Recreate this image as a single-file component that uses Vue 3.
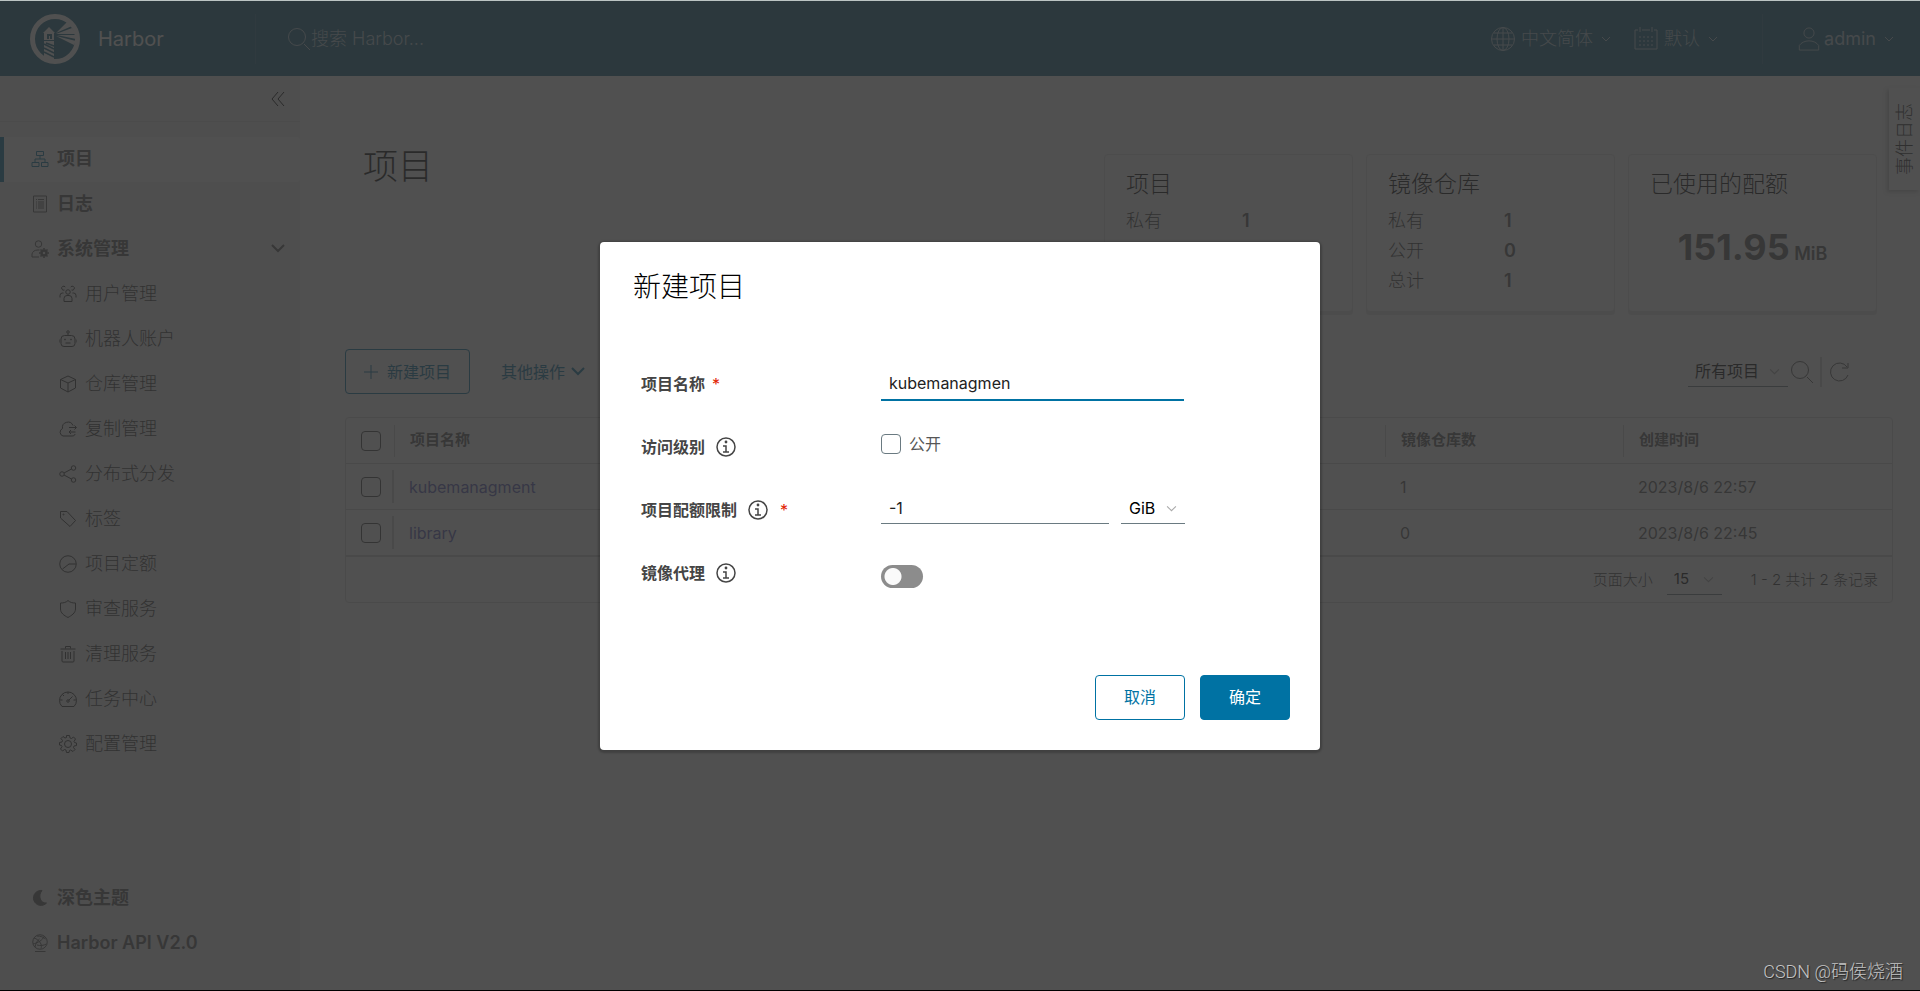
<script setup>
import { ref } from 'vue'

const adminItems = [
  { label: '用户管理', icon: 'users' },
  { label: '机器人账户', icon: 'robot' },
  { label: '仓库管理', icon: 'box' },
  { label: '复制管理', icon: 'cloud' },
  { label: '分布式分发', icon: 'share' },
  { label: '标签', icon: 'tag' },
  { label: '项目定额', icon: 'pie' },
  { label: '审查服务', icon: 'shield' },
  { label: '清理服务', icon: 'trash' },
  { label: '任务中心', icon: 'gauge' },
  { label: '配置管理', icon: 'cog' },
]

const icons = {
  users:
    '<circle cx="18" cy="14" r="4.5"/><path d="M10 33v-6a6 6 0 0 1 6-6h4a6 6 0 0 1 6 6v6zM11 10a4 4 0 1 1 1.500-6M25 10a4 4 0 1 0-1.500-6M2 25v-4a5 5 0 0 1 5-5h2M34 25v-4a5 5 0 0 0-5-5h-2"/>',
  robot:
    '<circle cx="18" cy="4" r="2.500"/><path d="M18 7v4M11 11h14a7 7 0 0 1 7 7v9a6 6 0 0 1-6 6H10a6 6 0 0 1-6-6v-9a7 7 0 0 1 7-7zM0 19v6M36 19v6M13 26h10"/><circle cx="12" cy="19" r="1"/><circle cx="24" cy="19" r="1"/>',
  box: '<path d="M18 2l15 7v17l-15 8-15-8V9zM3 9l15 7 15-7M18 16v18"/>',
  cloud:
    '<path d="M32 28c0 3-3 4-6 4H8a8 8 0 0 1-1-15 11 11 0 0 1 21-6M20 15h14M31 11l4 4-4 4M33 24H20M24 20l-4 4 4 4"/>',
  share:
    '<circle cx="6" cy="18" r="4.500"/><circle cx="29" cy="6" r="4.500"/><circle cx="29" cy="30" r="4.500"/><path d="M10 16l15-8M10 20l15 8"/>',
  tag: '<path d="M3 3h13l17 18-11 12L3 16z"/><circle cx="9" cy="9" r="1"/>',
  pie: '<circle cx="18" cy="18" r="16.500"/><path d="M34 18H20L7 28"/>',
  shield: '<path d="M18 1c4 4 9 5 15 5v12c0 8-8 13-15 17C10 31 3 26 3 18V6c6 0 11-1 15-5z"/>',
  trash: '<path d="M3 8h30M13 7V3h10v4M6 12v20a2 2 0 0 0 2 2h20a2 2 0 0 0 2-2V12M13 14v14M18 14v14M23 14v14"/>',
  gauge:
    '<path d="M6 33a17 17 0 1 1 24 0zM18 4v4M2 20h5M34 20h-5M7 9l3 3M19 21l8-8"/><circle cx="18" cy="22" r="2.500"/>',
  cog: '<circle cx="18" cy="18" r="7"/><path d="M15 1h6l1 5 3 1 4-3 4 4-3 5 1 2 4 1v5l-5 1-1 3 3 4-4 4-5-3-2 1-1 4h-5l-1-5-3-1-4 3-4-4 3-5-1-2-4-1v-5l5-1 1-3-3-4 4-4 4 3 3-1z"/>',
}

const repoStats = [
  { label: '私有', value: 1 },
  { label: '公开', value: 0 },
  { label: '总计', value: 1 },
]
const projectStats = [{ label: '私有', value: 1 }]

const rows = [
  { name: 'kubemanagment', repos: 1, created: '2023/8/6 22:57' },
  { name: 'library', repos: 0, created: '2023/8/6 22:45' },
]

const projectName = ref('kubemanagmen')
const isPublic = ref(false)
const quota = ref('-1')
const unit = ref('GiB')
const proxy = ref(false)
const filter = ref('所有项目')
const pageSize = ref('15')
</script>

<template>
  <div class="frame">
    <header class="topbar">
      <a class="brand" href="#">
        <svg class="logo" viewBox="0 0 50 50" aria-hidden="true">
          <circle cx="25" cy="25" r="22.500" fill="none" stroke="#fff" stroke-width="5" />
          <path fill="#fff" d="M13 19l6-6 6 6zM14 19h10v7H14zM26 19L37 8l5 4zM26 20l16-6 4 6zM27 21l19 0v4zM26 22l20 5-2 4z" />
          <path fill="#0e5f7d" d="M17 20h5v5h-2v-3h-1v3h-2z" />
          <path fill="#fff" d="M14 27h10v21l-10-3z" />
          <path stroke="#0e5f7d" stroke-width="1.500" d="M14 30l10 5M14 34l10 5M14 38l10 5M16 29l8 3" />
        </svg>
        <span class="brand-name">Harbor</span>
      </a>
      <label class="search">
        <svg class="i24" viewBox="0 0 24 24" aria-hidden="true"><circle cx="10" cy="10" r="8.500" /><path d="M17 17l6 6" /></svg>
        <input type="text" aria-label="搜索" placeholder="搜索 Harbor..." />
      </label>
      <div class="top-actions">
        <button class="top-btn lang" type="button">
          <svg class="i24" viewBox="0 0 24 24" aria-hidden="true"><circle cx="12" cy="12" r="11.500" /><ellipse cx="12" cy="12" rx="6" ry="11.500" /><path d="M12 1v22M1 12h22M3 6h18M3 18h18" /></svg>
          <span>中文简体</span>
          <svg class="chev" viewBox="0 0 10 6" aria-hidden="true"><path d="M1 1l4 4 4-4" /></svg>
        </button>
        <button class="top-btn theme" type="button">
          <svg class="i24" viewBox="0 0 24 24" aria-hidden="true"><path d="M4 3H1v19h22V3h-3M8 3h8M6 0v5M18 0v5" /><path stroke-dasharray="2 2" d="M5 10h15M5 14h15M5 18h15" /></svg>
          <span>默认</span>
          <svg class="chev" viewBox="0 0 10 6" aria-hidden="true"><path d="M1 1l4 4 4-4" /></svg>
        </button>
        <button class="top-btn user" type="button">
          <svg class="i24" viewBox="0 0 24 26" aria-hidden="true"><circle cx="12" cy="6.500" r="5.500" /><path d="M1.500 25v-5c2-3 6-5 10.500-5s8.500 2 10.500 5v5z" /></svg>
          <span>admin</span>
          <svg class="chev" viewBox="0 0 10 6" aria-hidden="true"><path d="M1 1l4 4 4-4" /></svg>
        </button>
      </div>
    </header>

    <div class="body">
      <nav class="sidebar">
        <div class="collapse">
          <button type="button" aria-label="收起">
            <svg width="14" height="14" viewBox="0 0 14 14" aria-hidden="true"><path d="M7 0L1 7l6 7M13 0L7 7l6 7" /></svg>
          </button>
        </div>
        <a class="item active" href="#">
          <svg class="icon" viewBox="0 0 36 36" aria-hidden="true"><path d="M11 3h14v8H11zM2 25h14v8H2zM21 25h13v8H21zM18 11v7M8 25v-7h20v7" /></svg>
          项目
        </a>
        <a class="item" href="#">
          <svg class="icon" viewBox="0 0 36 36" aria-hidden="true"><path d="M5 2h26v32H5zM10 9h2M10 14h2M10 18h2M10 22h2M10 26h2M14 9h12M14 14h12M14 18h12M14 22h12M14 26h12" /></svg>
          日志
        </a>
        <button class="item" type="button">
          <svg class="icon" viewBox="0 0 36 36" aria-hidden="true"><circle cx="15" cy="8" r="6.500" /><path d="M16 34H2v-6c1-5 5-8 12-8h3" /><circle cx="26" cy="26" r="5" stroke-width="5" /><path stroke-width="3" d="M26 16v3M26 33v3M16 26h3M33 26h3M19 19l2 2M31 31l2 2M19 33l2-2M31 21l2-2" /></svg>
          系统管理
          <svg class="caret" viewBox="0 0 14 9" aria-hidden="true"><path d="M1 1l6 6 6-6" /></svg>
        </button>
        <a v-for="it in adminItems" :key="it.label" class="item sub" href="#">
          <svg class="icon" viewBox="0 0 36 36" aria-hidden="true" v-html="icons[it.icon]"></svg>
          {{ it.label }}
        </a>
        <div class="bottom">
          <button class="item" type="button">
            <svg class="icon solid" viewBox="0 0 36 36" aria-hidden="true"><path d="M22 3A15 15 0 1 0 31 28 C19 29 13 14 22 3z" /></svg>
            深色主题
          </button>
          <a class="item" href="#">
            <svg class="icon" viewBox="0 0 36 36" aria-hidden="true"><circle cx="18" cy="16" r="14.500" /><path d="M6 8c5 1 11 6 14 12 1 3 1 6 0 9M12 4c7 0 13 2 17 6M4 20c9-2 20-8 22-15M8 26c2-9 5-13 9-16M12 22c7 2 13 1 19-2M8 35h21" /></svg>
            Harbor API V2.0
          </a>
        </div>
      </nav>

      <main class="content">
        <div class="summary">
          <h1>项目</h1>
          <div class="cards">
            <section class="card">
              <h2>项目</h2>
              <dl>
                <div v-for="s in projectStats" :key="s.label"><dt>{{ s.label }}</dt><dd>{{ s.value }}</dd></div>
              </dl>
            </section>
            <section class="card">
              <h2>镜像仓库</h2>
              <dl>
                <div v-for="s in repoStats" :key="s.label"><dt>{{ s.label }}</dt><dd>{{ s.value }}</dd></div>
              </dl>
            </section>
            <section class="card">
              <h2>已使用的配额</h2>
              <p class="quota"><strong>151.95</strong> <span>MiB</span></p>
            </section>
          </div>
        </div>

        <div class="toolbar">
          <button class="btn-new" type="button">
            <svg width="14" height="14" viewBox="0 0 14 14" aria-hidden="true"><path d="M7 0v14M0 7h14" /></svg>
            新建项目
          </button>
          <button class="btn-more" type="button">
            其他操作
            <svg width="14" height="9" viewBox="0 0 14 9" aria-hidden="true"><path d="M1 1l6 6 6-6" /></svg>
          </button>
          <div class="tools">
            <span class="select filter">
              <select v-model="filter" aria-label="项目类型"><option>所有项目</option></select>
              <svg class="arrow" viewBox="0 0 10 6" aria-hidden="true"><path d="M1 1l4 4 4-4" /></svg>
            </span>
            <button class="tool" type="button" aria-label="搜索">
              <svg width="24" height="24" viewBox="0 0 24 24" aria-hidden="true"><circle cx="10" cy="10" r="8.500" /><path d="M17 17l6 6" /></svg>
            </button>
            <span class="bar"></span>
            <button class="tool" type="button" aria-label="刷新">
              <svg width="20" height="20" viewBox="0 0 20 20" aria-hidden="true"><path d="M18 13a9 9 0 1 1-1-8M12 6h6V1" /></svg>
            </button>
          </div>
        </div>

        <div class="grid">
          <table>
            <colgroup><col class="c-check" /><col /><col class="c-repo" /><col class="c-date" /></colgroup>
            <thead>
              <tr>
                <th><div class="pick"><input class="box" type="checkbox" aria-label="全选" /></div></th>
                <th><div class="head">项目名称</div></th>
                <th><div class="head">镜像仓库数</div></th>
                <th><div class="head">创建时间</div></th>
              </tr>
            </thead>
            <tbody>
              <tr v-for="r in rows" :key="r.name">
                <td><div class="pick ruled"><input class="box" type="checkbox" :aria-label="r.name" /></div></td>
                <td><a href="#">{{ r.name }}</a></td>
                <td>{{ r.repos }}</td>
                <td>{{ r.created }}</td>
              </tr>
            </tbody>
          </table>
          <div class="pager">
            <label for="page-size">页面大小</label>
            <span class="select size">
              <select id="page-size" v-model="pageSize"><option>15</option></select>
              <svg class="arrow" viewBox="0 0 10 6" aria-hidden="true"><path d="M1 1l4 4 4-4" /></svg>
            </span>
            <span class="total">1 - 2 共计 2 条记录</span>
          </div>
        </div>
      </main>
    </div>

    <button class="events" type="button">事件日志</button>

    <div class="backdrop">
      <form class="modal" role="dialog" aria-labelledby="dlg-title" @submit.prevent>
        <h3 id="dlg-title">新建项目</h3>
        <div class="fields">
          <div class="row">
            <label class="name" for="p-name">项目名称 <i>*</i></label>
            <input id="p-name" v-model="projectName" class="text focus" type="text" />
          </div>
          <div class="row">
            <span class="name">访问级别
              <svg class="info" viewBox="0 0 20 20" aria-hidden="true"><circle cx="10" cy="10" r="9" /><path d="M7 9h3v6M7 15h6" /><circle class="dot" cx="10" cy="5" r="1.400" /></svg>
            </span>
            <label class="check"><input v-model="isPublic" class="box" type="checkbox" />公开</label>
          </div>
          <div class="row">
            <label class="name" for="p-quota">项目配额限制
              <svg class="info" viewBox="0 0 20 20" aria-hidden="true"><circle cx="10" cy="10" r="9" /><path d="M7 9h3v6M7 15h6" /><circle class="dot" cx="10" cy="5" r="1.400" /></svg>
              <i class="far">*</i>
            </label>
            <div class="pair">
              <input id="p-quota" v-model="quota" class="text" type="text" />
              <span class="select unit">
                <select v-model="unit" aria-label="单位"><option>GiB</option></select>
                <svg class="arrow" viewBox="0 0 10 6" aria-hidden="true"><path d="M1 1l4 4 4-4" /></svg>
              </span>
            </div>
          </div>
          <div class="row">
            <label class="name" for="p-proxy">镜像代理
              <svg class="info" viewBox="0 0 20 20" aria-hidden="true"><circle cx="10" cy="10" r="9" /><path d="M7 9h3v6M7 15h6" /><circle class="dot" cx="10" cy="5" r="1.400" /></svg>
            </label>
            <input id="p-proxy" v-model="proxy" class="toggle" type="checkbox" role="switch" />
          </div>
        </div>
        <div class="footer">
          <button class="btn" type="button">取消</button>
          <button class="btn primary" type="submit">确定</button>
        </div>
      </form>
    </div>

    <div class="mark">CSDN @码侯烧酒</div>
  </div>
</template>

<style>
body {
  margin: 0;
  background: #505050;
}
</style>

<style scoped>
* {
  box-sizing: border-box;
}
.frame {
  position: relative;
  display: flex;
  flex-direction: column;
  min-height: 100vh;
  border-top: 1px solid #bcc4c3;
  border-bottom: 1px solid #000;
  background: #fafafa;
  color: #565656;
  font: 400 16px/24px Inter, "Noto Sans CJK SC", sans-serif;
}
button,
input,
select {
  margin: 0;
  padding: 0;
  border: 0;
  border-radius: 0;
  background: none;
  color: inherit;
  font: inherit;
}
a {
  color: inherit;
  text-decoration: none;
}
svg {
  flex: none;
  fill: none;
  stroke: currentColor;
}
h1,
h2,
h3,
p,
dl,
dd {
  margin: 0;
}

.topbar {
  display: flex;
  align-items: center;
  height: 75px;
  background: #0e5f7d;
  color: #fff;
}
.brand {
  display: flex;
  align-items: center;
  gap: 18px;
  width: 255px;
  padding-left: 30px;
}
.logo {
  width: 50px;
  height: 50px;
  stroke: none;
}
.brand-name {
  font-size: 20px;
}
.search {
  display: flex;
  align-items: center;
  height: 50px;
  padding-left: 31px;
  border-left: 1px solid #286f8a;
  color: #b8cfdc;
}
.search input {
  width: 200px;
  font-size: 18px;
  font-weight: 300;
}
.search input::placeholder {
  color: inherit;
  opacity: 1;
}
.i24 {
  width: 24px;
  height: 24px;
}
.top-actions {
  display: flex;
  margin-left: auto;
}
.top-btn {
  display: flex;
  align-items: center;
  height: 50px;
  color: #b8cfdc;
  font-size: 18px;
  font-weight: 300;
}
.top-btn span {
  margin: 0 8px 0 6px;
}
.lang {
  margin-right: 23px;
}
.theme {
  padding-right: 44px;
}
.user {
  padding: 0 26px 0 34px;
  border-left: 1px solid #286f8a;
}
.user span {
  margin-left: 3px;
  font-weight: 400;
}
.chev {
  width: 10px;
  height: 6px;
}

.body {
  display: flex;
  flex: 1;
}
.sidebar {
  display: flex;
  flex: none;
  flex-direction: column;
  width: 300px;
  padding-bottom: 24px;
  background: #eee;
}
.collapse {
  display: flex;
  justify-content: flex-end;
  align-items: center;
  height: 46px;
  margin-bottom: 15px;
  padding-right: 15px;
  border-bottom: 1px solid #dadada;
  color: #000;
}
.collapse button {
  display: flex;
}
.item {
  display: flex;
  align-items: center;
  gap: 8px;
  width: 100%;
  height: 45px;
  padding: 0 15px 2px 31px;
  color: #565656;
  font-size: 18px;
  font-weight: 700;
  text-align: left;
}
.item.active {
  padding-left: 27px;
  border-left: 4px solid #0072a3;
  border-radius: 0 4px 4px 0;
  background: #fff;
}
.active .icon {
  color: #0072a3;
}
.item.sub {
  padding-left: 59px;
  color: #333;
  font-weight: 300;
}
.icon {
  width: 18px;
  height: 18px;
  stroke-width: 2;
}
.icon.solid {
  fill: currentColor;
}
.caret {
  width: 14px;
  height: 9px;
  margin-left: auto;
  stroke-width: 2;
}
.bottom {
  margin-top: auto;
}
.bottom a {
  font-weight: 600;
}

.content {
  flex: 1;
  min-width: 0;
  padding: 78px 27px 24px 45px;
}
.summary {
  display: flex;
  justify-content: space-between;
  padding: 0 16px 0 18px;
}
h1 {
  color: #000;
  font-size: 35px;
  font-weight: 300;
  line-height: 24px;
}
.cards {
  display: flex;
  gap: 13px;
}
.card {
  width: 249px;
  height: 158px;
  padding: 14px 21px;
  border: 1px solid #e0e0e0;
  border-radius: 4px;
  background: #fff;
  box-shadow: 0 3px 0 0 #e0e0e0;
}
h2 {
  color: #000;
  font-size: 23px;
  font-weight: 300;
  line-height: 30px;
}
dl {
  padding-top: 7px;
}
dl div {
  display: flex;
  font-size: 18px;
  line-height: 30px;
}
dt {
  width: 116px;
  color: #333;
  font-weight: 300;
}
dd {
  font-weight: 600;
}
.quota {
  padding-top: 24px;
  text-align: center;
  line-height: 48px;
}
.quota strong {
  font-size: 36px;
}
.quota span {
  font-size: 18px;
  font-weight: 600;
}

.toolbar {
  display: flex;
  align-items: center;
  margin-top: 37px;
}
.btn-new {
  display: flex;
  align-items: center;
  gap: 9px;
  height: 45px;
  padding: 0 18px;
  border: 1px solid #0072a3;
  border-radius: 4px;
  color: #0072a3;
}
.btn-more {
  display: flex;
  align-items: center;
  gap: 6px;
  margin-left: 31px;
  color: #0072a3;
}
.btn-more svg {
  stroke-width: 2;
}
.tools {
  display: flex;
  align-items: center;
  margin-right: 43px;
  margin-left: auto;
}
.tool {
  display: flex;
}
.bar {
  width: 2px;
  height: 30px;
  margin: 0 8px 0 6px;
  background: #ccc;
}
.select {
  display: inline-grid;
  align-items: center;
  border-bottom: 1px solid #6a7a81;
  color: #000;
}
.select select {
  grid-area: 1 / 1;
  width: 100%;
  height: 29px;
  padding-left: 7px;
  appearance: none;
}
.select .arrow {
  grid-area: 1 / 1;
  justify-self: end;
  width: 11px;
  height: 7px;
  margin-right: 8px;
  color: #aaa;
  pointer-events: none;
}
.filter {
  width: 100px;
  margin-right: 2px;
}

.grid {
  margin-top: 23px;
  border: 1px solid #d8d8d8;
  border-radius: 4px;
  background: #fff;
}
table {
  width: 100%;
  border-spacing: 0;
  table-layout: fixed;
}
.c-check {
  width: 48px;
}
.c-repo {
  width: 238px;
}
.c-date {
  width: 269px;
}
th,
td {
  height: 46px;
  padding: 0;
  border-bottom: 1px solid #ccc;
  text-align: left;
}
td + td {
  padding-left: 15px;
}
tbody a {
  color: #5659b8;
}
.head {
  height: 32px;
  padding-left: 15px;
  border-left: 1px solid #ccc;
  font-size: 15px;
  font-weight: 600;
  line-height: 30px;
}
.pick {
  display: flex;
  align-items: center;
  height: 33px;
  padding-left: 15px;
}
.pick.ruled {
  border-right: 2px solid #ccc;
}
.box {
  flex: none;
  width: 20px;
  height: 20px;
  border: 1px solid #6a7a81;
  border-radius: 4px;
  appearance: none;
}
table .box {
  border-color: #444;
}
.pager {
  display: flex;
  justify-content: flex-end;
  align-items: center;
  height: 46px;
  padding-right: 14px;
  border-top: 1px solid #ccc;
  font-size: 15px;
}
.pager label,
.pager .total {
  color: #333;
  font-weight: 300;
}
.size {
  width: 55px;
  margin: 0 29px 0 14px;
}

.events {
  position: absolute;
  top: 87px;
  right: 0;
  width: 31px;
  height: 102px;
  background: #fff;
  box-shadow: 2px -2px 4px rgba(0, 0, 0, 0.25);
  color: #222;
  font-size: 18px;
  font-weight: 300;
  line-height: 30px;
  writing-mode: vertical-rl;
  text-orientation: sideways;
  transform: rotate(180deg);
}

.backdrop {
  position: absolute;
  inset: 0;
  display: flex;
  justify-content: center;
  align-items: center;
  background: rgba(49, 49, 49, 0.85);
}
.modal {
  width: 720px;
  padding: 30px;
  border-radius: 4px;
  background: #fff;
  box-shadow: 0 1px 2px 2px rgba(0, 0, 0, 0.2);
}
h3 {
  padding-left: 3px;
  color: #000;
  font-size: 28px;
  font-weight: 300;
  line-height: 30px;
}
.fields {
  display: grid;
  gap: 30px;
  padding: 66px 0 0 11px;
}
.row {
  display: grid;
  grid-template-columns: 240px 1fr;
  align-items: center;
  height: 33px;
}
.name {
  display: flex;
  align-items: center;
  color: #454545;
  font-weight: 600;
}
.name i {
  margin-left: 7px;
  color: #e12200;
  font-style: normal;
  font-weight: 400;
}
.name i.far {
  margin-left: 12px;
}
.info {
  width: 20px;
  height: 20px;
  margin-left: 11px;
  stroke-width: 1.5;
}
.info .dot {
  fill: currentColor;
  stroke: none;
}
.text {
  width: 303px;
  height: 33px;
  padding: 0 8px;
  border-bottom: 1px solid #6a7a81;
  color: #222;
}
.text.focus {
  border-bottom: 2px solid #0072a3;
}
.pair {
  display: flex;
  align-self: start;
  gap: 12px;
}
.pair .text {
  width: 228px;
  height: 30px;
}
.unit {
  width: 64px;
}
.unit select {
  padding-left: 8px;
}
.check {
  display: flex;
  align-items: center;
  gap: 8px;
  padding-bottom: 6px;
}
.toggle {
  width: 42px;
  height: 23px;
  margin-top: 6px;
  border-radius: 12px;
  background: radial-gradient(circle at 12px 50%, #fafafa 8px, #8c8c8c 9px);
  appearance: none;
}
.footer {
  display: flex;
  justify-content: flex-end;
  gap: 15px;
  padding-top: 85px;
}
.btn {
  width: 90px;
  height: 45px;
  border: 1px solid #0072a3;
  border-radius: 4px;
  color: #0072a3;
}
.btn.primary {
  background: #0072a3;
  color: #fff;
}
.mark {
  position: absolute;
  right: 17px;
  bottom: 6px;
  color: #c4c4c4;
  font-family: Roboto, "Noto Sans CJK SC", sans-serif;
  font-size: 18px;
  font-weight: 300;
  text-shadow: 1px 1px 1px #222;
}
</style>
